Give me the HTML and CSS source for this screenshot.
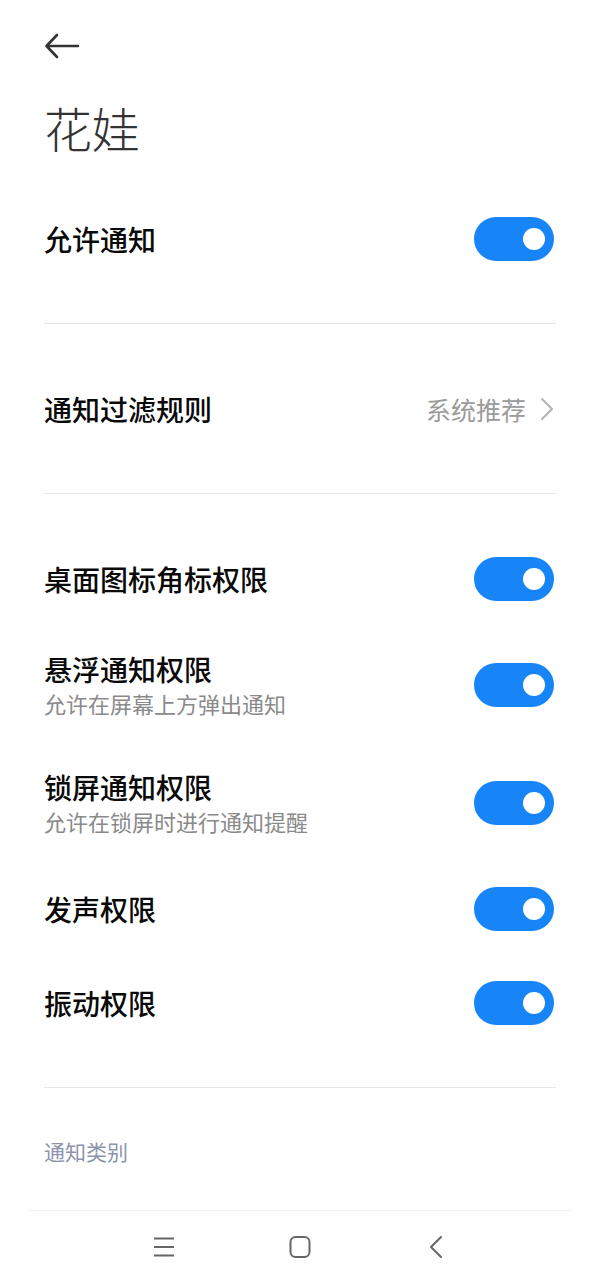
FILE: index.html
```html
<!DOCTYPE html>
<html lang="zh-CN">
<head>
  <meta charset="UTF-8" />
  <meta name="viewport" content="width=device-width, initial-scale=1" />
  <title>花娃 - 通知管理</title>
  <link rel="stylesheet" href="styles.css">
</head>
<body>
  <div class="page">
    <div class="topbar">
      <svg class="back" width="36" height="36" viewBox="0 0 36 36">
        <path d="M34 18 H3 M13 7 L2.5 18 L13 29" fill="none" stroke="#333" stroke-width="2.6" stroke-linecap="round" stroke-linejoin="round"/>
      </svg>
    </div>
    <h1 class="title">花娃</h1>

    <div class="section">
      <div class="row">
        <div class="label">允许通知</div>
        <div class="switch on"><span></span></div>
      </div>
    </div>

    <div class="section">
      <div class="row">
        <div class="label">通知过滤规则</div>
        <div class="value">
          系统推荐
          <svg width="14" height="24" viewBox="0 0 14 24">
            <path d="M2 2 L12 12 L2 22" fill="none" stroke="#b3b3b3" stroke-width="2" stroke-linecap="round" stroke-linejoin="round"/>
          </svg>
        </div>
      </div>
    </div>

    <div class="section">
      <div class="row">
        <div class="label">桌面图标角标权限</div>
        <div class="switch on"><span></span></div>
      </div>
      <div class="row tall">
        <div>
          <div class="label">悬浮通知权限</div>
          <div class="sub">允许在屏幕上方弹出通知</div>
        </div>
        <div class="switch on"><span></span></div>
      </div>
      <div class="row tall">
        <div>
          <div class="label">锁屏通知权限</div>
          <div class="sub">允许在锁屏时进行通知提醒</div>
        </div>
        <div class="switch on"><span></span></div>
      </div>
      <div class="row">
        <div class="label">发声权限</div>
        <div class="switch on"><span></span></div>
      </div>
      <div class="row">
        <div class="label">振动权限</div>
        <div class="switch on"><span></span></div>
      </div>
    </div>

    <div class="category">通知类别</div>
  </div>

  <nav class="navbar">
    <svg width="24" height="24" viewBox="0 0 24 24">
      <path d="M2 3.5 H22 M2 12 H22 M2 20.5 H22" fill="none" stroke="#666" stroke-width="2"/>
    </svg>
    <svg width="24" height="24" viewBox="0 0 24 24">
      <rect x="2.5" y="2" width="19" height="20" rx="5" fill="none" stroke="#666" stroke-width="2"/>
    </svg>
    <svg width="24" height="24" viewBox="0 0 24 24">
      <path d="M17 2 L7 12 L17 22" fill="none" stroke="#666" stroke-width="2" stroke-linecap="round" stroke-linejoin="round"/>
    </svg>
  </nav>
</body>
</html>
```

FILE: styles.css
```css
body {
  margin: 0;
  background: #fff;
  color: #000;
  font-family: "Noto Sans CJK SC", "Noto Sans", sans-serif;
}
.page {
  padding: 0 44px;
}
.topbar {
  height: 92px;
  display: flex;
  align-items: center;
}
.title {
  margin: 8px 0 0;
  line-height: 54px;
  font-size: 48px;
  font-weight: 300;
  color: #333;
}
.section {
  padding: 38px 0 37px;
  border-bottom: 1px solid #e6e6e6;
}
.row {
  display: flex;
  align-items: center;
  justify-content: space-between;
  height: 94px;
  padding-right: 2px;
}
.row.tall {
  height: 118px;
}
.label {
  font-size: 28px;
  line-height: 36px;
  font-weight: 500;
  color: #0a0a0a;
}
.sub {
  font-size: 22px;
  line-height: 32px;
  color: #8a8a8a;
}
.value {
  display: flex;
  align-items: center;
  gap: 14px;
  font-size: 25px;
  color: #9a9a9a;
}
.switch {
  position: relative;
  width: 80px;
  height: 44px;
  border-radius: 22px;
  background: #ccc;
}
.switch.on {
  background: #1785f7;
}
.switch span {
  position: absolute;
  top: 11px;
  right: 9px;
  width: 22px;
  height: 22px;
  border-radius: 50%;
  background: #fff;
}
.category {
  padding: 46px 0 42px;
  font-size: 21px;
  line-height: 34px;
  color: #8c93ad;
}
.navbar {
  margin: 0 28px;
  height: 72px;
  border-top: 1px solid #f0f0f0;
  display: flex;
  align-items: center;
  justify-content: center;
  gap: 112px;
}
```
